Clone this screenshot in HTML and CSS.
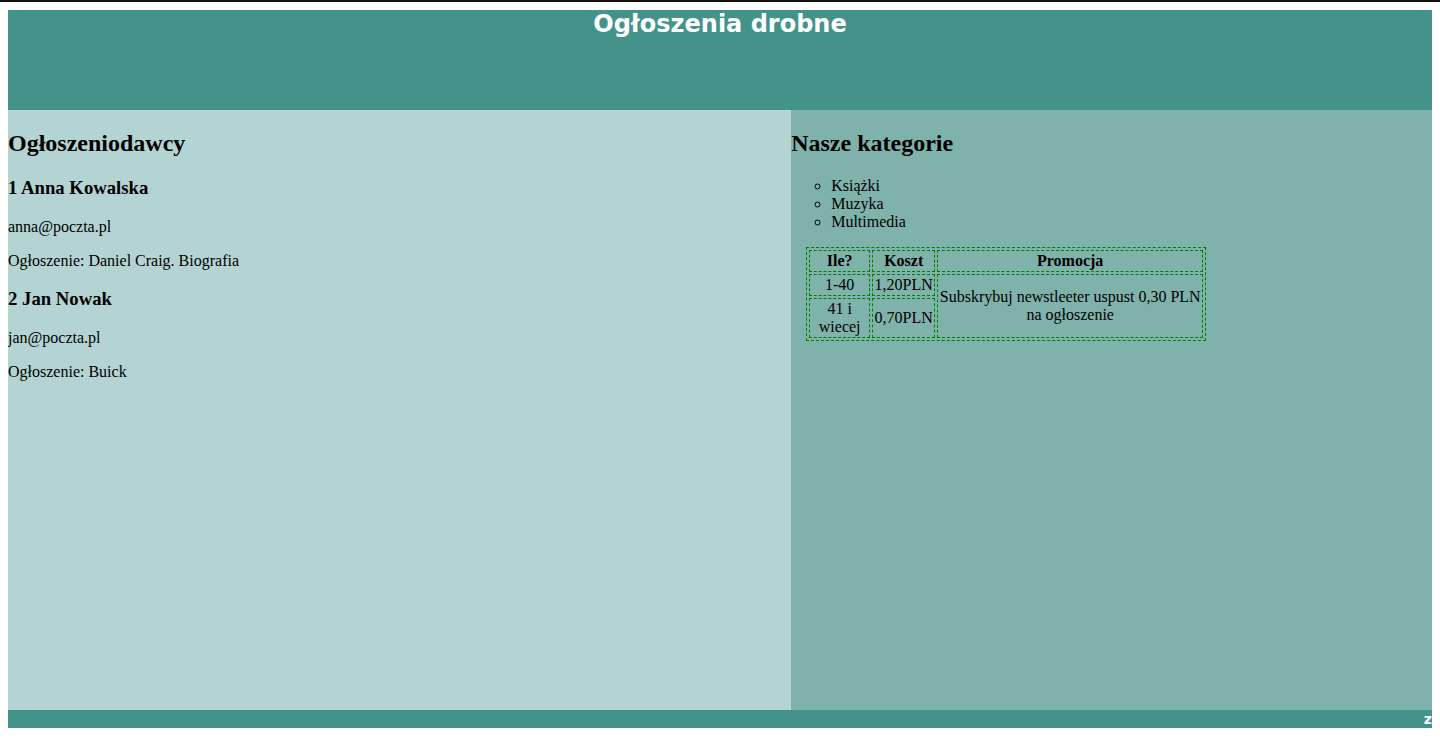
FILE: index.html
```html
<!DOCTYPE html>
<html lang="pl">
<head>
<meta charset="utf-8">
<title>Ogłoszenia drobne</title>
<link rel="stylesheet" href="styles.css">
</head>
<body>
<header class="banner">
  <h1 class="banner-title">Ogłoszenia drobne</h1>
</header>
<main class="columns">
  <section class="col-left">
    <h2>Ogłoszeniodawcy</h2>
    <h3>1 Anna Kowalska</h3>
    <p>anna@poczta.pl</p>
    <p>Ogłoszenie: Daniel Craig. Biografia</p>
    <h3>2 Jan Nowak</h3>
    <p>jan@poczta.pl</p>
    <p>Ogłoszenie: Buick</p>
  </section>
  <section class="col-right">
    <h2>Nasze kategorie</h2>
    <ul class="cats">
      <li>Książki</li>
      <li>Muzyka</li>
      <li>Multimedia</li>
    </ul>
    <table class="prices">
      <tr><th class="c-ile">Ile?</th><th class="c-koszt">Koszt</th><th>Promocja</th></tr>
      <tr><td>1-40</td><td>1,20PLN</td><td rowspan="2">Subskrybuj newstleeter uspust 0,30 PLN na ogłoszenie</td></tr>
      <tr><td>41 i wiecej</td><td>0,70PLN</td></tr>
    </table>
  </section>
</main>
<footer class="foot">z</footer>
</body>
</html>
```
FILE: styles.css
```css
html {
  border-top: 2px solid #111;
}
body {
  margin: 8px;
  font-family: "Liberation Serif", "Times New Roman", serif;
  font-size: 16px;
  color: #000;
}
.banner {
  background: #44938a;
  height: 100px;
}
.banner-title {
  margin: 0;
  text-align: center;
  color: #fff;
  font-family: "DejaVu Sans", Verdana, sans-serif;
  font-weight: bold;
  font-size: 24px;
}
.columns {
  display: flex;
  height: 600px;
}
.col-left {
  width: 55%;
  background: #b3d4d3;
  display: flow-root;
  padding-top: 1px;
  box-sizing: border-box;
}
.col-left > h2:first-child,
.col-right > h2:first-child {
  margin-top: 19px;
}
.col-right {
  width: 45%;
  background: #7fb2ab;
  display: flow-root;
  padding-top: 1px;
  box-sizing: border-box;
}
.cats {
  list-style: circle;
  padding-left: 40px;
}
.prices {
  width: 400px;
  margin-left: 15px;
  border: 1px dashed green;
}
.prices th,
.prices td {
  border: 1px dashed green;
  text-align: center;
  padding: 1px;
}
.prices .c-ile {
  width: 57px;
}
.prices .c-koszt {
  width: 59px;
}
.foot {
  background: #44938a;
  color: #fff;
  text-align: right;
  font-family: "DejaVu Sans", Verdana, sans-serif;
  font-weight: bold;
  font-size: 14px;
  line-height: 18px;
  height: 18px;
}
```
